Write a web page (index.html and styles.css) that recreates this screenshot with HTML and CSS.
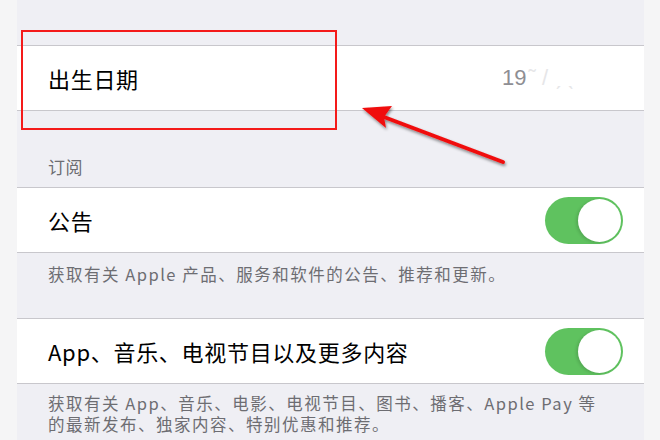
FILE: index.html
```html
<!DOCTYPE html>
<html lang="zh-CN">
<head>
    <meta charset="UTF-8">
    <title>出生日期</title>
    <link rel="stylesheet" href="styles.css">
</head>
<body>
    <div class="screen">
        <div class="cell first">
            <span class="cell-title">出生日期</span>
            <span class="cell-value">19<span class="blur">˜ / ˏ ˎ</span></span>
        </div>

        <div class="group-header">订阅</div>
        <div class="cell">
            <span class="cell-title">公告</span>
            <div class="switch on"><div class="knob"></div></div>
        </div>
        <div class="group-footer">获取有关 Apple 产品、服务和软件的公告、推荐和更新。</div>

        <div class="cell">
            <span class="cell-title">App、音乐、电视节目以及更多内容</span>
            <div class="switch on"><div class="knob"></div></div>
        </div>
        <div class="group-footer last">获取有关 App、音乐、电影、电视节目、图书、播客、Apple Pay 等<br>的最新发布、独家内容、特别优惠和推荐。</div>
    </div>

    <!-- annotation drawn over the screenshot -->
    <div class="mark-box"></div>
    <svg class="mark-arrow" width="660" height="440" viewBox="0 0 660 440">
        <defs>
            <filter id="shadow" x="-20%" y="-20%" width="140%" height="140%">
                <feDropShadow dx="1" dy="2" stdDeviation="1.5" flood-color="#000" flood-opacity="0.45"/>
            </filter>
        </defs>
        <g filter="url(#shadow)" fill="#f01010" stroke="#f01010">
            <line x1="503" y1="162" x2="384" y2="117" stroke-width="4" stroke-linecap="round"/>
            <polygon points="362,108 392,106 384,117 386,128" stroke="none"/>
        </g>
    </svg>
</body>
</html>
```

FILE: styles.css
```css
body {
    margin: 0;
    padding: 0;
    background-color: #f5f5f6;
    font-family: "Noto Sans CJK SC", "Noto Sans", sans-serif;
    width: 660px;
    height: 440px;
    overflow: hidden;
    position: relative;
}
.screen {
    margin-left: 17px;
    width: 627px;
    height: 440px;
    padding-top: 45px;
    box-sizing: border-box;
    background-color: #efeff4;
    overflow: hidden;
}
.cell {
    display: flex;
    align-items: center;
    justify-content: space-between;
    height: 64px;
    padding: 0 21px 0 31px;
    background-color: white;
    border-top: 1px solid #c8c7cc;
    border-bottom: 1px solid #c8c7cc;
}
.cell-title {
    font-size: 22px;
    letter-spacing: 0.7px;
    color: #000;
}
.cell-value {
    font-family: "Liberation Sans", "Noto Sans CJK SC", sans-serif;
    font-size: 22px;
    color: #8e8e93;
    width: 110px;
    margin-right: 11px;
    white-space: nowrap;
}
.cell-value .blur {
    color: #e6e6e8;
    margin-left: 2px;
}
.group-header {
    padding: 46px 0 10px 31px;
    font-size: 17px;
    letter-spacing: 0.5px;
    line-height: 20px;
    color: #6d6d72;
}
.group-footer {
    padding: 10px 0 33px 31px;
    font-size: 16.5px;
    letter-spacing: 1.5px;
    line-height: 22px;
    color: #6d6d72;
    white-space: nowrap;
}
.group-footer.last {
    padding-top: 9px;
    line-height: 21px;
}
.switch {
    width: 78px;
    height: 47px;
    border-radius: 24px;
    background-color: #e5e5ea;
    position: relative;
    box-sizing: border-box;
}
.switch.on {
    background-color: #5fc25f;
}
.knob {
    position: absolute;
    top: 2px;
    right: 2px;
    width: 43px;
    height: 43px;
    border-radius: 50%;
    background-color: white;
    box-shadow: -2px 1px 3px rgba(0, 0, 0, 0.12);
}
.mark-box {
    position: absolute;
    left: 21px;
    top: 30px;
    width: 312px;
    height: 96px;
    border: 2px solid #f41a1a;
}
.mark-arrow {
    position: absolute;
    left: 0;
    top: 0;
}
```
